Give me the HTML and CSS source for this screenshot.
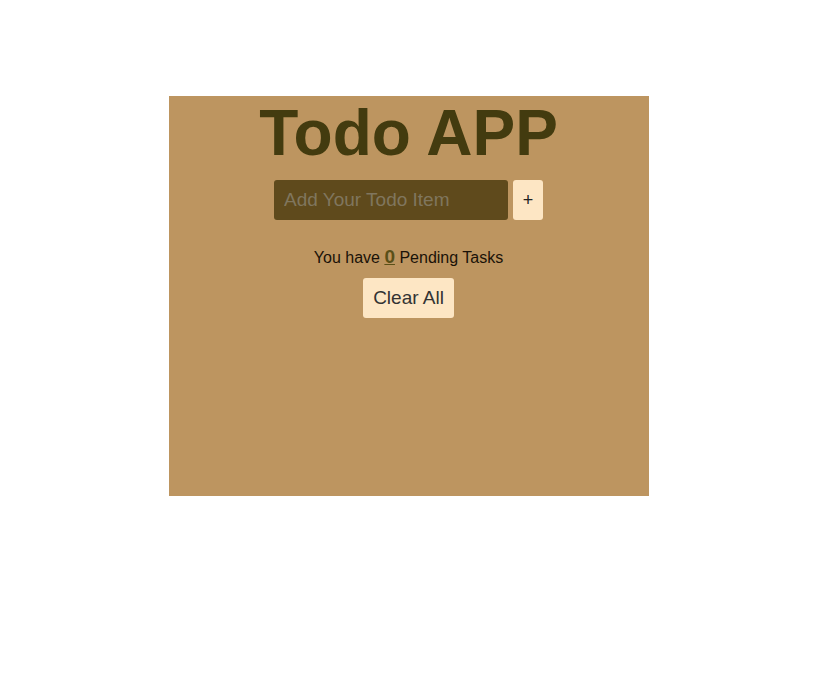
FILE: index.html
```html
<!DOCTYPE html>
<html>
<head>
<meta charset="utf-8">
<link rel="stylesheet" href="styles.css">
</head>
<body>
<div class="app">
  <h1 class="title">Todo APP</h1>
  <div class="add-row">
    <input class="todo-input" type="text" placeholder="Add Your Todo Item">
    <button class="add-btn">+</button>
  </div>
  <p class="pending">You have <span class="count">0</span> Pending Tasks</p>
  <button class="clear-btn">Clear All</button>
</div>
</body>
</html>
```
FILE: styles.css
```css
body {
  margin: 0;
  background: #ffffff;
  font-family: "Liberation Sans", Arial, sans-serif;
}
.app {
  box-sizing: border-box;
  width: 480px;
  height: 400px;
  margin: 96px 0 0 169px;
  padding-right: 1px;
  background: #bd9560;
  display: flex;
  flex-direction: column;
  align-items: center;
}
.title {
  margin: 0;
  font-size: 64px;
  line-height: 74px;
  font-weight: bold;
  color: #433b0f;
}
.add-row {
  margin-top: 10px;
  display: flex;
  gap: 5px;
}
.todo-input {
  box-sizing: border-box;
  width: 234px;
  height: 40px;
  border: none;
  border-radius: 3px;
  background: #5f4a1c;
  padding: 0 10px;
  font-family: "Liberation Sans", Arial, sans-serif;
  font-size: 19px;
  color: #eee;
  outline: none;
}
.todo-input::placeholder {
  color: #80765e;
}
.add-btn {
  width: 30px;
  height: 40px;
  border: none;
  border-radius: 3px;
  background: #fde6c4;
  color: #222;
  font-family: "Liberation Sans", Arial, sans-serif;
  font-size: 18px;
  padding: 0;
}
.pending {
  margin: 26px 0 0;
  font-size: 16px;
  line-height: 22px;
  color: #1a1208;
}
.count {
  font-weight: bold;
  font-size: 19px;
  text-decoration: underline;
  color: #5a5018;
}
.clear-btn {
  margin-top: 9px;
  height: 40px;
  padding: 0 10px;
  border: none;
  border-radius: 3px;
  background: #fde6c4;
  color: #333;
  font-family: "Liberation Sans", Arial, sans-serif;
  font-size: 19px;
}
```
